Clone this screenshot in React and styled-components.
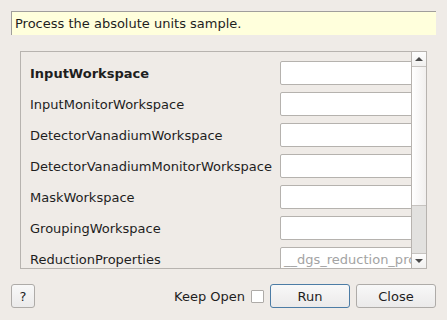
import React from "react";
import styled, { createGlobalStyle } from "styled-components";

const Global = createGlobalStyle`
	body {
		margin: 0;
		background: #efebe7;
		font-family: "DejaVu Sans", sans-serif;
		font-size: 13px;
		color: #1e1e1e;
	}
`;

const Dialog = styled.div`
	width: 447px;
	height: 320px;
	box-sizing: border-box;
	padding: 11px 11px 0 11px;
	display: flex;
	flex-direction: column;
`;

const Description = styled.div`
	height: 24px;
	box-sizing: border-box;
	background: #ffffdc;
	border-top: 1px solid #a09e9c;
	border-left: 1px solid #a09e9c;
	padding-left: 3px;
	display: flex;
	align-items: center;
`;

const ScrollArea = styled.div`
	margin: 16px 9px 0 9px;
	height: 218px;
	box-sizing: border-box;
	border: 1px solid #b7b3af;
	display: flex;
	overflow: hidden;
`;

const Viewport = styled.div`
	flex: 1;
	overflow: hidden;
	padding: 9px 0 0 9px;
`;

const Grid = styled.div`
	display: grid;
	grid-template-columns: 250px 160px;
	row-gap: 7px;
	width: 410px;
`;

const Label = styled.div`
	height: 24px;
	display: flex;
	align-items: center;
	white-space: nowrap;
	font-weight: ${(p) => (p.bold ? 700 : 400)};
`;

const Field = styled.div`
	height: 24px;
	box-sizing: border-box;
	background: #fff;
	border: 1px solid #b5b2ae;
	border-radius: 2px;
	padding-left: 3px;
	display: flex;
	align-items: center;
	color: #a3a3a3;
	white-space: nowrap;
	overflow: hidden;
`;

const ScrollBar = styled.div`
	width: 14px;
	border-left: 1px solid #b7b3af;
	display: flex;
	flex-direction: column;
	background: #e2e1df;
`;

const Arrow = styled.div`
	height: 14px;
	display: flex;
	align-items: center;
	justify-content: center;
	background: linear-gradient(#fdfdfd, #f1f0ef);
	border-${(p) => (p.down ? "top" : "bottom")}: 1px solid #c6c3c0;
	&::after {
		content: "";
		border-left: 4px solid transparent;
		border-right: 4px solid transparent;
		border-${(p) => (p.down ? "top" : "bottom")}: 4px solid #4a4a4a;
	}
`;

const Handle = styled.div`
	height: 138px;
	background: linear-gradient(90deg, #ffffff, #f1efee);
	border-bottom: 1px solid #c6c3c0;
`;

const Track = styled.div`
	flex: 1;
`;

const Footer = styled.div`
	margin-top: 15px;
	display: flex;
	align-items: center;
`;

const Button = styled.button`
	height: 24px;
	width: ${(p) => p.width || 80}px;
	box-sizing: border-box;
	font-family: inherit;
	font-size: 13px;
	color: #1e1e1e;
	padding: 0;
	border-radius: 3px;
	border: 1px solid ${(p) => (p.primary ? "#4c7ca5" : "#aeaba8")};
	background: linear-gradient(#f8f8f8, #ebeaea);
	margin-left: ${(p) => p.gap || 0}px;
`;

const Spacer = styled.div`
	flex: 1;
`;

const KeepOpen = styled.label`
	display: flex;
	align-items: center;
	gap: 6px;
	margin-right: 6px;
`;

const Box = styled.span`
	width: 13px;
	height: 13px;
	box-sizing: border-box;
	background: #fff;
	border: 1px solid #aeaba8;
	border-radius: 1px;
`;

const properties = [
	{ name: "InputWorkspace", bold: true },
	{ name: "InputMonitorWorkspace" },
	{ name: "DetectorVanadiumWorkspace" },
	{ name: "DetectorVanadiumMonitorWorkspace" },
	{ name: "MaskWorkspace" },
	{ name: "GroupingWorkspace" },
	{ name: "ReductionProperties", value: "__dgs_reduction_properties" },
];

const App = () => {
	return (
		<Dialog>
			<Global />
			<Description>Process the absolute units sample.</Description>
			<ScrollArea>
				<Viewport>
					<Grid>
						{properties.map((p) => (
							<React.Fragment key={p.name}>
								<Label bold={p.bold}>{p.name}</Label>
								<Field>{p.value}</Field>
							</React.Fragment>
						))}
					</Grid>
				</Viewport>
				<ScrollBar>
					<Arrow />
					<Handle />
					<Track />
					<Arrow down />
				</ScrollBar>
			</ScrollArea>
			<Footer>
				<Button width={24}>?</Button>
				<Spacer />
				<KeepOpen>
					Keep Open
					<Box />
				</KeepOpen>
				<Button primary>Run</Button>
				<Button gap={6}>Close</Button>
			</Footer>
		</Dialog>
	);
};

export default App;
